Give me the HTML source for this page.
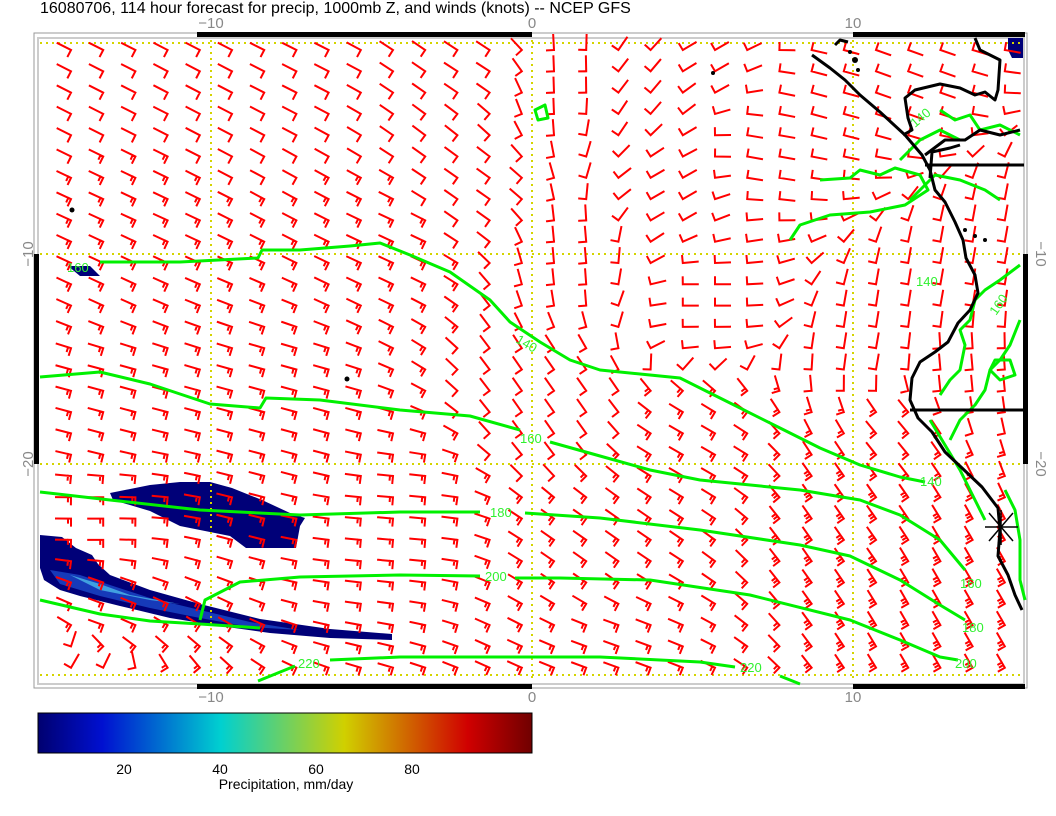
<!DOCTYPE html>
<html><head><meta charset="utf-8"><style>
html,body{margin:0;padding:0;background:#fff;width:1056px;height:816px;overflow:hidden}
svg{display:block}
text{font-family:"Liberation Sans",sans-serif}
</style></head><body>
<svg id="s" width="1056" height="816" viewBox="0 0 1056 816" xmlns="http://www.w3.org/2000/svg">
<defs>
<linearGradient id="cb" x1="0" x2="1" y1="0" y2="0">
<stop offset="0" stop-color="#000070"/>
<stop offset="0.13" stop-color="#0010d0"/>
<stop offset="0.37" stop-color="#00d0d0"/>
<stop offset="0.62" stop-color="#d0d000"/>
<stop offset="0.87" stop-color="#d00000"/>
<stop offset="1" stop-color="#700000"/>
</linearGradient>
</defs>
<text x="40" y="13" font-size="16" fill="#000">16080706, 114 hour forecast for precip, 1000mb Z, and winds (knots) -- NCEP GFS</text>
<g fill="#888" font-size="15" text-anchor="middle">
<text x="211" y="28">−10</text><text x="532" y="28">0</text><text x="853" y="28">10</text>
<text x="211" y="702">−10</text><text x="532" y="702">0</text><text x="853" y="702">10</text>
<text transform="translate(33,254) rotate(-90)">−10</text>
<text transform="translate(33,464) rotate(-90)">−20</text>
<text transform="translate(1036,254) rotate(90)">−10</text>
<text transform="translate(1036,464) rotate(90)">−20</text>
</g>
<rect x="34" y="33" width="993" height="655" fill="none" stroke="#999" stroke-width="1"/>
<rect x="38" y="38" width="986" height="646" fill="none" stroke="#ccc" stroke-width="2"/>
<g fill="#000">
<rect x="197" y="32" width="335" height="5"/><rect x="853" y="32" width="172" height="5"/>
<rect x="197" y="684" width="335" height="5"/><rect x="853" y="684" width="172" height="5"/>
<rect x="34" y="254" width="5" height="210"/><rect x="1023" y="254" width="5" height="210"/>
</g>
<path d="M110,493 L150,485 L180,482 L210,482 L232,488 L262,500 L290,513 L305,518 L300,526 L296,548 L246,548 L230,536 L205,531 L180,526 L150,511 L113,500Z" fill="#000078"/>
<path d="M40,535 L62,537 L76,548 L92,555 L98,564 L110,575 L150,590 L200,604 L260,619 L330,629 L392,634 L392,640 L330,638 L270,633 L220,626 L170,618 L120,606 L80,596 L60,590 L44,580 L40,568Z" fill="#000078"/>
<path d="M50,570 L80,575 L110,585 L150,598 L200,610 L250,622 L300,630 L250,627 L200,618 L150,608 L100,596 L60,584Z" fill="#1840c0" opacity="0.9"/>
<path d="M70,575 L100,584 L130,595 L180,604 L150,600 L100,590Z" fill="#40a0e0"/>
<path d="M1008,38 L1023,38 L1023,58 L1012,58 L1008,50Z" fill="#000078"/>
<path d="M68,266 L90,266 L100,276 L80,276Z" fill="#000078"/>
<g stroke="#d4d400" stroke-width="2" stroke-dasharray="2,4" fill="none">
<line x1="40" y1="43" x2="1022" y2="43"/><line x1="40" y1="254" x2="1022" y2="254"/>
<line x1="40" y1="464" x2="1022" y2="464"/><line x1="40" y1="675" x2="1022" y2="675"/>
<line x1="211" y1="40" x2="211" y2="682"/><line x1="532" y1="40" x2="532" y2="682"/>
<line x1="853" y1="40" x2="853" y2="682"/>
</g>
<g id="barbs" stroke="#f00" stroke-width="2" fill="none" stroke-linecap="square"></g>
<g stroke="#00f000" stroke-width="3" fill="none" stroke-linejoin="round">
<path d="M100,262 L180,262 L258,258 L262,250 L300,250 L350,246 L380,243 L410,255 L450,272 L490,300 L510,322 L540,342 L570,360 L600,370 L640,374 L680,378 L720,398 L780,428 L820,448 L860,465 L900,477 L925,482"/>
<path d="M40,377 L100,372 L150,384 L210,404 L260,408 L266,398 L320,400 L400,410 L470,416 L520,430 M550,442 L600,456 L650,470 L700,480 L800,490 L860,500 L900,515 L940,540 L965,570"/>
<path d="M40,492 L110,500 L200,510 L300,515 L400,512 L480,512 M525,513 L600,518 L700,530 L800,545 L850,556 L900,580 L940,605 L965,620"/>
<path d="M40,600 L100,614 L150,621 L200,624 L260,628 M200,620 L205,600 L240,582 L300,577 L400,575 L480,576 M515,578 L560,578 L650,580 L750,595 L850,620 L900,640 L940,657 L958,660"/>
<path d="M258,681 L295,666 M330,660 L400,657 L500,657 L600,657 L700,662 L735,667 M780,676 L800,684"/>
<path d="M790,240 L800,225 L830,215 L870,212 L905,205 L928,190 L920,175 L895,168 L880,175 L860,170 L850,178 L820,180"/>
<path d="M940,110 L955,120 L970,115 L980,130 L1000,125 L1020,135"/>
<path d="M910,200 L925,185 L935,175 L960,180 L985,190 L1000,200"/>
<path d="M940,395 L950,380 L960,370 L965,345 L960,330 L970,320 L975,300 L985,290 L1000,280 L1020,265"/>
<path d="M950,440 L960,420 L975,405 L985,390 L990,370 L1000,360 L1010,345 L1020,320"/>
<path d="M930,420 L945,445 L960,470 L975,500 L985,520 M1005,490 L1015,510 L1020,540 L1020,580 L1025,600"/>
<path d="M990,370 L1000,380 L1015,375 L1010,360 L995,360Z"/>
<path d="M900,160 L920,140 L940,130 L960,140"/>
<path d="M535,110 L545,105 L548,118 L538,120Z"/>
</g>
<g fill="#30f030" font-size="13">
<text x="515" y="342" transform="rotate(30 515 342)">140</text>
<text x="520" y="443">160</text><text x="490" y="517">180</text><text x="485" y="581">200</text>
<text x="298" y="668">220</text><text x="740" y="672">220</text>
<text x="916" y="286">140</text><text x="920" y="486">140</text>
<text x="960" y="588">160</text><text x="962" y="632">180</text><text x="955" y="668">200</text>
<text x="67" y="272">160</text><text x="915" y="128" transform="rotate(-40 915 128)">140</text>
<text x="996" y="316" transform="rotate(-55 996 316)">160</text>
</g>
<g stroke="#000" stroke-width="3" fill="none" stroke-linejoin="round">
<path d="M812,55 L830,68 L845,80 L860,95 L880,112 L905,135 L922,155 L930,170 L935,190 L945,202 L955,222 L963,240 L966,258 L975,275 L978,293 L970,310 L958,323 L948,342 L935,352 L920,362 L912,378 L910,400 L918,418 L932,432 L945,452 L962,468 L982,487 L998,508 L1000,530 L998,556 L1008,575 L1015,595 L1022,610"/>
<path d="M925,165 L1024,165"/><path d="M910,410 L1024,410"/>
<path d="M975,38 L980,50 L1000,60 L998,90 L995,100 L985,92 L975,95 L960,88 L940,84 L915,90 L905,98 L908,118 L912,130 L903,135"/>
<path d="M925,155 L945,140 L965,140 L980,130 L1000,135 L1020,130"/>
<path d="M930,178 L932,152 L950,148 L960,145"/>
<path d="M835,45 L840,40 L848,42"/>
</g>
<g fill="#000"><circle cx="72" cy="210" r="2.5"/><circle cx="347" cy="379" r="2.5"/><circle cx="713" cy="73" r="2"/>
<circle cx="855" cy="60" r="3"/><circle cx="850" cy="52" r="2"/><circle cx="858" cy="70" r="2"/><circle cx="965" cy="230" r="2"/><circle cx="975" cy="236" r="2"/><circle cx="985" cy="240" r="2"/></g>
<g stroke="#000" stroke-width="1.5"><line x1="985" y1="527" x2="1018" y2="527"/><line x1="1001" y1="510" x2="1001" y2="545"/><line x1="989" y1="513" x2="1013" y2="541"/><line x1="989" y1="541" x2="1013" y2="513"/></g>
<rect x="38" y="713" width="494" height="40" fill="url(#cb)" stroke="#000" stroke-width="1"/>
<g font-size="14" fill="#000" text-anchor="middle">
<text x="124" y="774">20</text><text x="220" y="774">40</text><text x="316" y="774">60</text><text x="412" y="774">80</text>
<text x="286" y="789">Precipitation, mm/day</text>
</g>
</svg>
<script>
(function(){
var A=[[80,60,207,1],[300,60,207,1],[480,60,213,1],[100,250,205,2],[400,250,205,2],[480,200,215,1],
[570,80,268,1],[575,250,265,1],[560,400,235,1],[640,80,310,1],[700,60,330,1],[660,200,330,1],
[760,150,10,1],[700,300,0,1],[820,100,15,1],[900,80,20,1],[940,300,280,1],[880,360,280,1],[1000,250,280,1],
[100,520,180,2],[400,520,185,2],[100,620,200,2],[80,670,300,1],[600,560,215,2],[700,450,210,2],
[850,520,235,3],[950,600,240,3],[900,430,230,2],[300,420,195,2],[100,420,195,2],[620,650,200,2],[950,370,265,1]];
var g=document.getElementById('barbs'),out='';
for(var i=0;i<30;i++)for(var j=0;j<30;j++){
 var x=71+i*32.2,y=50+j*21.3;if(x>1018||y>682)continue;
 var sc=0,ss=0,wt=0,nt=0;
 for(var k=0;k<A.length;k++){var dx=x-A[k][0],dy=y-A[k][1],d=dx*dx+dy*dy+100,w=1/(d*d);
  var a=A[k][2]*Math.PI/180;sc+=w*Math.cos(a);ss+=w*Math.sin(a);wt+=w;nt+=w*A[k][3];}
 var a=Math.atan2(ss,sc),n=Math.round(nt/wt);
 var c=Math.cos(a),s=Math.sin(a),L=15,T=7;
 var ex=x+c*L,ey=y+s*L;
 var tc=Math.cos(a-Math.PI/2),ts=Math.sin(a-Math.PI/2);
 out+='M'+x.toFixed(1)+','+y.toFixed(1)+'L'+ex.toFixed(1)+','+ey.toFixed(1);
 for(var m=0;m<n;m++){var bx=x+c*3*m,by=y+s*3*m,tl=(m==0)?T:4;
  out+='M'+bx.toFixed(1)+','+by.toFixed(1)+'L'+(bx+tc*tl).toFixed(1)+','+(by+ts*tl).toFixed(1);}
}
var p=document.createElementNS('http://www.w3.org/2000/svg','path');p.setAttribute('d',out);g.appendChild(p);
})();
</script>
</body></html>
